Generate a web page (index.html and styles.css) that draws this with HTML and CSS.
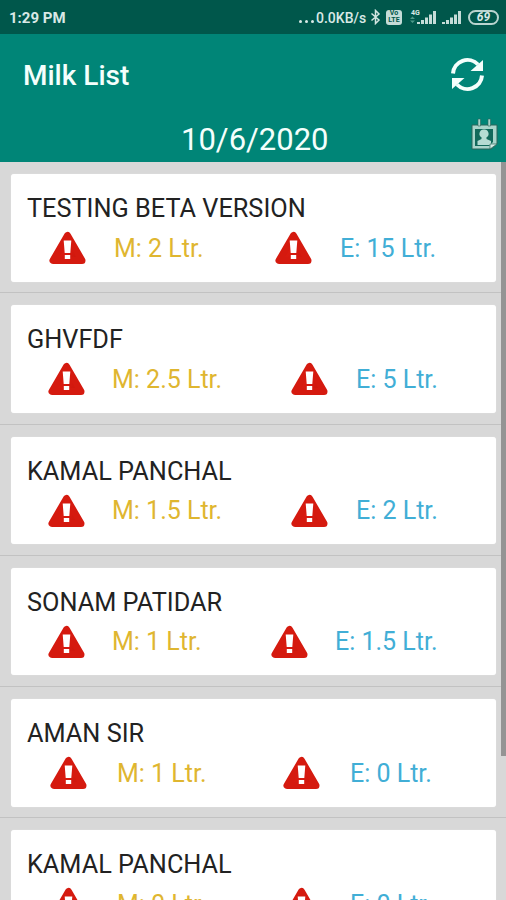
FILE: index.html
```html
<!DOCTYPE html>
<html lang="en">

<head>
    <meta charset="UTF-8">
    <meta name="viewport" content="width=device-width, initial-scale=1.0">
    <title>Milk List</title>
    <link rel="stylesheet" href="styles.css">
</head>

<body>
    <svg width="0" height="0" class="defs">
        <defs>
            <linearGradient id="red" x1="0" y1="0" x2="1" y2="1">
                <stop offset="0" stop-color="#ea2013" />
                <stop offset="1" stop-color="#c9160d" />
            </linearGradient>
            <symbol id="warn" viewBox="0 0 37 34">
                <path d="M18.500 4.500L4 29.500H33Z" fill="url(#red)" stroke="#d51a0f" stroke-width="7" stroke-linejoin="round" />
                <path d="M14.700 9.500h7.600l-1 12.500h-5.600zM15.800 24h5.400v4h-5.400z" fill="#fff" />
            </symbol>
        </defs>
    </svg>
    <div class="status">
        <span class="time">1:29 PM</span>
        <span class="dots"><i></i><i></i><i></i></span>
        <span class="speed">0.0KB/s</span>
        <svg class="bt" width="11" height="16" viewBox="0 0 11 16">
            <path d="M1.500 4.500L9 11l-3.500 3.500v-13L9 5l-7.500 6.500" fill="none" stroke="#d3e5e1" stroke-width="1.500" />
        </svg>
        <span class="volte">Vo<br>LTE</span>
        <svg class="signals" width="52" height="18" viewBox="0 0 52 18">
            <g fill="#c5dcd8">
                <path d="M7 14h3v2H7zM11 12h3v4h-3zM15 9.500h3V16h-3zM19 6.500h3V16h-3zM23 3h3v13h-3z" />
                <path d="M32 14h3v2h-3zM36 12h3v4h-3zM40 9.500h3V16h-3zM44 6.500h3V16h-3zM48 3h3v13h-3z" />
            </g>
            <path d="M0 11l2.500-2.500L5 11zM0 12.500h5L2.500 15z" fill="#4d9989" />
            <text x="1" y="7" class="net">4G</text>
        </svg>
        <span class="battery">69</span>
    </div>
    <header>
        <div class="bar">
            <h1>Milk List</h1>
            <svg width="35" height="35" viewBox="0 0 35 35">
                <g fill="none" stroke="#f4fffc" stroke-width="4">
                    <path d="M3 16.500A14.500 14.500 0 0 1 28 7.500" />
                    <path d="M32 18.500A14.500 14.500 0 0 1 7 27.500" />
                </g>
                <path d="M33 3v11H20.500zM2 32V21h12.500z" fill="#f4fffc" />
            </svg>
        </div>
        <div class="date">
            <span>10/6/2020</span>
            <svg width="28" height="34" viewBox="0 0 28 34">
                <path d="M2 7h25v19l-6 5H2z" fill="#a9d5cb" stroke="#2b655a" />
                <path d="M5 11h18v13l-4 4H5z" fill="#12695b" />
                <path d="M8 1h2.500v7H8zM18 1h2.500v7H18z" fill="#a9d5cb" stroke="#2b655a" stroke-width=".6" />
                <path d="M14 11.500a4.200 4.200 0 0 1 2.500 7.800v1.700l4.500 2V27H7.500v-4l4-2v-1.700A4.200 4.200 0 0 1 14 11.500z" fill="#b5dcd3" />
                <path d="M20 31v-5h7z" fill="#d5eee8" stroke="#2b655a" stroke-width=".7" />
            </svg>
        </div>
    </header>
    <main>
        <div class="item">
            <div class="card">
                <h2>TESTING BETA VERSION</h2>
                <div class="milk testing">
                    <svg><use href="#warn" /></svg>
                    <span class="m">M: 2 Ltr.</span>
                    <svg><use href="#warn" /></svg>
                    <span class="e">E: 15 Ltr.</span>
                </div>
            </div>
        </div>
        <div class="item">
            <div class="card">
                <h2>GHVFDF</h2>
                <div class="milk long">
                    <svg><use href="#warn" /></svg>
                    <span class="m">M: 2.5 Ltr.</span>
                    <svg><use href="#warn" /></svg>
                    <span class="e">E: 5 Ltr.</span>
                </div>
            </div>
        </div>
        <div class="item">
            <div class="card">
                <h2>KAMAL PANCHAL</h2>
                <div class="milk long">
                    <svg><use href="#warn" /></svg>
                    <span class="m">M: 1.5 Ltr.</span>
                    <svg><use href="#warn" /></svg>
                    <span class="e">E: 2 Ltr.</span>
                </div>
            </div>
        </div>
        <div class="item">
            <div class="card">
                <h2>SONAM PATIDAR</h2>
                <div class="milk late">
                    <svg><use href="#warn" /></svg>
                    <span class="m">M: 1 Ltr.</span>
                    <svg><use href="#warn" /></svg>
                    <span class="e">E: 1.5 Ltr.</span>
                </div>
            </div>
        </div>
        <div class="item">
            <div class="card">
                <h2>AMAN SIR</h2>
                <div class="milk short">
                    <svg><use href="#warn" /></svg>
                    <span class="m">M: 1 Ltr.</span>
                    <svg><use href="#warn" /></svg>
                    <span class="e">E: 0 Ltr.</span>
                </div>
            </div>
        </div>
        <div class="item">
            <div class="card">
                <h2>KAMAL PANCHAL</h2>
                <div class="milk short">
                    <svg><use href="#warn" /></svg>
                    <span class="m">M: 0 Ltr.</span>
                    <svg><use href="#warn" /></svg>
                    <span class="e">E: 0 Ltr.</span>
                </div>
            </div>
        </div>
        <div class="scroll"></div>
    </main>
</body>

</html>
```
FILE: styles.css
```css
* {
    margin: 0;
    padding: 0;
    box-sizing: border-box;
}

body {
    height: 900px;
    overflow: hidden;
    display: flex;
    flex-direction: column;
    background: #d8d8d8;
    font-family: Roboto, "Liberation Sans", sans-serif;
}

.defs {
    position: absolute;
}

.status {
    flex: none;
    height: 34px;
    padding: 0 7px 0 9px;
    display: flex;
    align-items: center;
    background: #00574b;
    color: #d9e9e6;
}

.time {
    font-size: 15px;
    font-weight: 700;
    margin-right: auto;
    padding-top: 1px;
}

.dots {
    display: flex;
    gap: 3px;
    margin: 9px 2px 0 0;
}

.dots i {
    width: 3px;
    height: 3px;
    border-radius: 50%;
    background: #d9e9e6;
}

.speed {
    font-size: 14px;
    font-weight: 500;
    width: 51px;
    padding-top: 2px;
    white-space: nowrap;
}

.bt {
    margin: 0 5px 0 3px;
}

.volte {
    width: 16px;
    height: 15px;
    border-radius: 3px;
    background: #c5dcd8;
    color: #00574b;
    font-size: 7px;
    line-height: 7px;
    font-weight: 700;
    text-align: center;
}

.signals {
    margin: 0 6px 0 8px;
}

.net {
    font-size: 7px;
    font-weight: 700;
    fill: #d9e9e6;
}

.battery {
    width: 31px;
    height: 15px;
    border: 2px solid #b9d4cf;
    border-radius: 8px;
    font-size: 12px;
    line-height: 11px;
    font-weight: 700;
    font-style: italic;
    text-align: center;
}

header {
    flex: none;
    height: 128px;
    background: #008577;
    color: #f4fffc;
}

.bar {
    height: 80px;
    padding: 0 21px 0 23px;
    display: flex;
    align-items: center;
    justify-content: space-between;
}

h1 {
    font-size: 28px;
    font-weight: 500;
    padding-top: 2px;
}

.date {
    height: 48px;
    padding: 4px 8px 0 0;
    display: grid;
    grid-template-columns: 181px 1fr 28px;
}

.date span {
    grid-column: 2;
    font-size: 31px;
    line-height: 43px;
}

main {
    position: relative;
    flex: 1;
    min-height: 0;
    overflow: hidden;
}

.item {
    height: 131.250px;
    padding: 12px 10px 0 11px;
    border-bottom: 1px solid #c2c2c2;
}

.card {
    height: 107.500px;
    padding: 18px 16px 0;
    border-radius: 3px;
    background: #fff;
    box-shadow: 0 0 1px #eee;
}

h2 {
    font-size: 25.300px;
    line-height: 33px;
    font-weight: 400;
    color: #222;
}

.milk {
    display: grid;
    align-items: center;
    height: 46px;
    font-size: 25px;
    white-space: nowrap;
}

.milk svg {
    width: 37px;
    height: 34px;
}

/* columns: icon + gap, morning, icon + gap, evening */
.testing {
    padding-left: 22px;
    grid-template-columns: 65px 161px 65px 1fr;
}

.long {
    padding-left: 21px;
    grid-template-columns: 64px 179px 65px 1fr;
}

.late {
    padding-left: 21px;
    grid-template-columns: 64px 159px 64px 1fr;
}

.short {
    padding-left: 23px;
    grid-template-columns: 67px 166px 67px 1fr;
}

.m {
    color: #dfb630;
}

.e {
    color: #41aed6;
}

.scroll {
    position: absolute;
    top: 0;
    right: 0;
    width: 5px;
    height: 594px;
    background: #949494;
}
```
